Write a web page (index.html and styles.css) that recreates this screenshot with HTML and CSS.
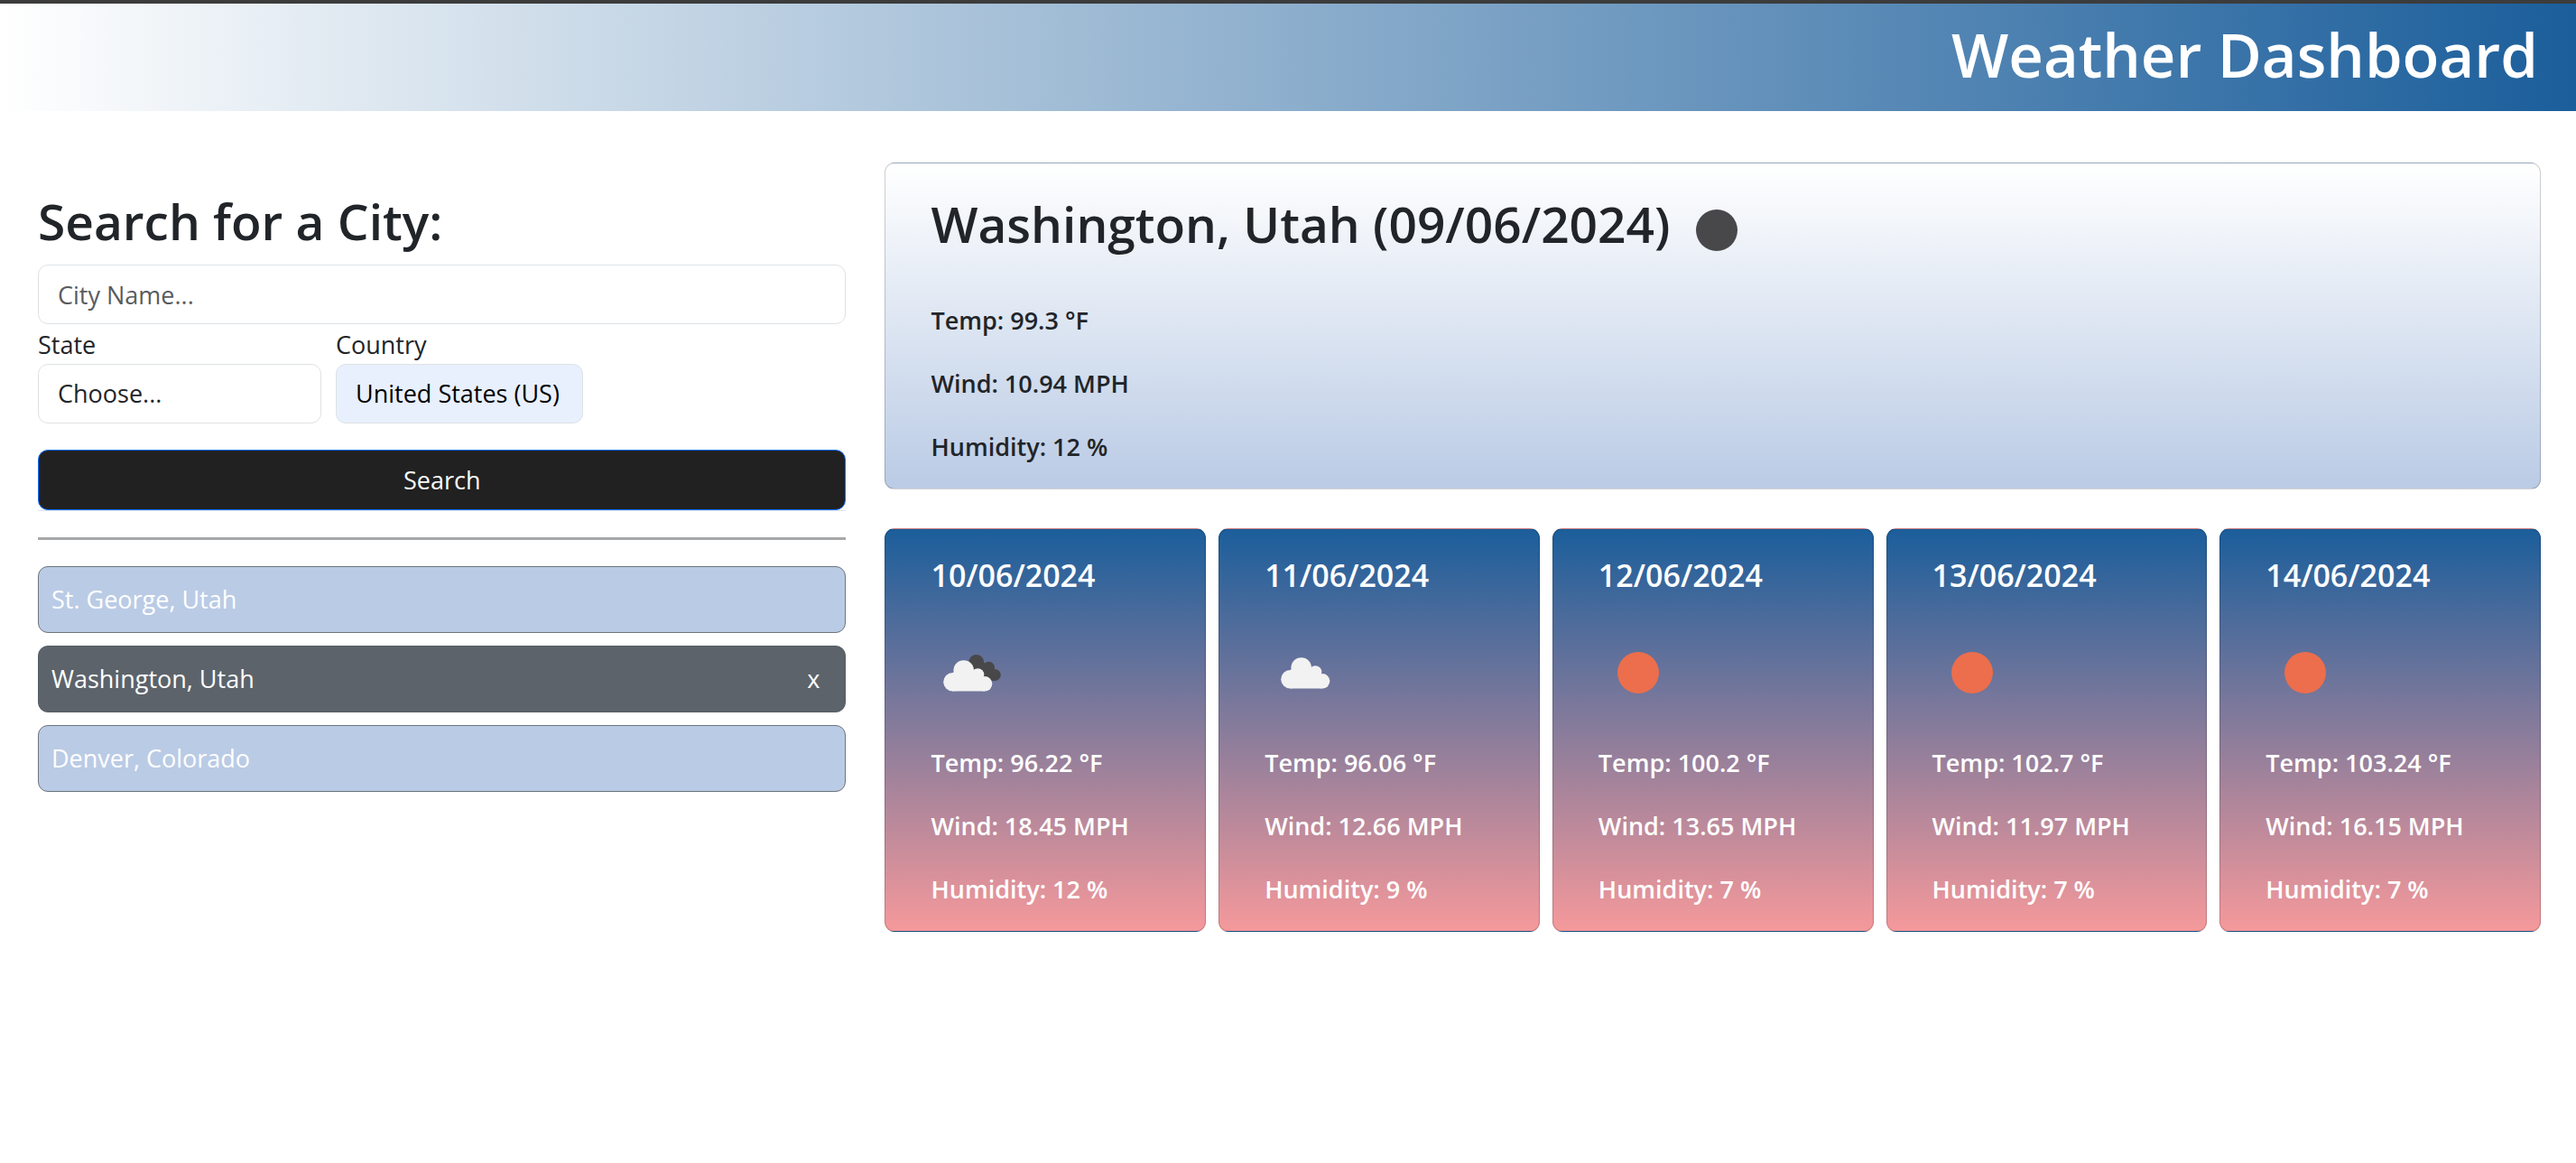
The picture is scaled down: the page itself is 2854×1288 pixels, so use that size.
FILE: index.html
```html
<!DOCTYPE html>
<html lang="en">
<head>
<meta charset="utf-8">
<meta name="viewport" content="width=device-width, initial-scale=1">
<title>Weather Dashboard</title>
<link rel="stylesheet" href="styles.css">
</head>
<body>
<svg width="0" height="0" class="sprite" aria-hidden="true">
  <symbol id="cloud" viewBox="0 0 55 35">
    <circle cx="10.500" cy="24.300" r="10.300"/>
    <circle cx="22.700" cy="11.500" r="11.300"/>
    <circle cx="38.300" cy="16.200" r="7"/>
    <circle cx="46" cy="26.300" r="8.300"/>
    <path d="M10.500 14L22 8L38 14L46 20V34.600H10.500Z"/>
  </symbol>
</svg>
<header class="site-header"><h1>Weather Dashboard</h1></header>
<main class="layout">
  <aside class="sidebar">
    <form class="search">
      <h2><label for="city">Search for a City:</label></h2>
      <input id="city" class="control" type="text" placeholder="City Name...">
      <div class="field-row">
        <div class="field state">
          <label for="state">State</label>
          <select id="state" class="control"><option>Choose...</option></select>
        </div>
        <div class="field country">
          <label for="country">Country</label>
          <select id="country" class="control filled"><option>United States (US)</option></select>
        </div>
      </div>
      <button class="search-button" type="submit">Search</button>
    </form>
    <hr class="divider">
    <ul class="history">
      <li><button type="button">St. George, Utah</button></li>
      <li class="active"><button type="button">Washington, Utah</button><button type="button" class="remove" aria-label="Remove Washington, Utah">x</button></li>
      <li><button type="button">Denver, Colorado</button></li>
    </ul>
  </aside>
  <section class="weather">
    <article class="card today">
      <div class="title-row">
        <h2>Washington, Utah (09/06/2024)</h2>
        <svg class="icon" viewBox="0 0 88 88"><circle cx="44" cy="44" r="23" fill="#48484a"/></svg>
      </div>
      <p>Temp: 99.3 °F</p>
      <p>Wind: 10.94 MPH</p>
      <p>Humidity: 12 %</p>
    </article>
    <div class="forecast">
      <article class="card day">
        <h3>10/06/2024</h3>
        <svg class="icon" viewBox="0 0 88 88">
          <g fill="#48484a"><circle cx="50.700" cy="32.500" r="8.500"/><circle cx="64.500" cy="38.300" r="6.500"/><circle cx="71.300" cy="46.500" r="6.500"/><path d="M50 28L65 36L72 53H56Z"/></g>
          <use href="#cloud" x="14" y="30" width="55" height="35" fill="#f2f2f2"/>
        </svg>
        <p>Temp: 96.22 °F</p>
        <p>Wind: 18.45 MPH</p>
        <p>Humidity: 12 %</p>
      </article>
      <article class="card day">
        <h3>11/06/2024</h3>
        <svg class="icon" viewBox="0 0 88 88"><use href="#cloud" x="18" y="27" width="55" height="35" fill="#f2f2f2"/></svg>
        <p>Temp: 96.06 °F</p>
        <p>Wind: 12.66 MPH</p>
        <p>Humidity: 9 %</p>
      </article>
      <article class="card day">
        <h3>12/06/2024</h3>
        <svg class="icon" viewBox="0 0 88 88"><circle cx="44" cy="44" r="23" fill="#ec6e4c"/></svg>
        <p>Temp: 100.2 °F</p>
        <p>Wind: 13.65 MPH</p>
        <p>Humidity: 7 %</p>
      </article>
      <article class="card day">
        <h3>13/06/2024</h3>
        <svg class="icon" viewBox="0 0 88 88"><circle cx="44" cy="44" r="23" fill="#ec6e4c"/></svg>
        <p>Temp: 102.7 °F</p>
        <p>Wind: 11.97 MPH</p>
        <p>Humidity: 7 %</p>
      </article>
      <article class="card day">
        <h3>14/06/2024</h3>
        <svg class="icon" viewBox="0 0 88 88"><circle cx="44" cy="44" r="23" fill="#ec6e4c"/></svg>
        <p>Temp: 103.24 °F</p>
        <p>Wind: 16.15 MPH</p>
        <p>Humidity: 7 %</p>
      </article>
    </div>
  </section>
</main>
</body>
</html>
```

FILE: styles.css
```css
* { box-sizing: border-box; }
body {
  margin: 0;
  background: #fff;
  color: #212529;
  font: 400 27px/42px "Open Sans", "Noto Sans", sans-serif;
}
.sprite { display: block; }
h1, h2, h3, p { margin: 0; }
.site-header {
  border-top: 4px solid #3c3c3c;
  padding: 14px 42px 21px;
  background: linear-gradient(to right, #fff, #1b5e9b);
  color: #fff;
  text-align: right;
}
h1 { font-size: 67px; line-height: 84px; font-weight: 600; }
h2 { font-size: 55px; line-height: 74px; font-weight: 600; }
.layout {
  display: grid;
  grid-template-columns: 328fr 672fr;
  gap: 43px;
  padding: 57px 39px 57px 42px;
}
.sidebar { padding-top: 28px; }
.search { border-bottom: 1px solid #dee2e6; }
.search h2 { margin-bottom: 11px; }
.control {
  appearance: none;
  display: block;
  width: 100%;
  height: 66px;
  padding: 0 21px;
  border: 1px solid #dee2e6;
  border-radius: 11px;
  background: #fff;
  color: #212529;
  font: inherit;
}
.control::placeholder { color: #595c5f; opacity: 1; }
.control.filled { background: #e8f0fe; color: #000; }
.field-row { display: flex; gap: 16px; margin-top: 2px; }
.field label { display: block; }
.state { flex: 0 1 314px; }
.country { flex: 0 1 274px; }
.search-button {
  display: block;
  width: 100%;
  height: 67px;
  margin-top: 29px;
  border: 1px solid #0d6efd;
  border-radius: 11px;
  background: #212121;
  color: #fff;
  font: inherit;
}
.divider { height: 3px; margin: 29px 0; border: 0; background: #a6a8a9; }
.history { display: grid; gap: 14px; margin: 0; padding: 0; list-style: none; }
.history li {
  display: flex;
  height: 74px;
  border: 1px solid #6c757d;
  border-radius: 11px;
  background: #bacbe5;
}
.history .active { background: #5c636a; border-color: #565e64; }
.history button {
  flex: 1;
  padding: 0 14px;
  border: 0;
  background: none;
  color: #fff;
  font: inherit;
  text-align: left;
}
.history .remove { flex: none; padding: 0 28px; }
.weather { min-width: 0; }
.card {
  border: 1px solid rgba(0, 0, 0, 0.18);
  border-radius: 11px;
  padding: 30px 28px 11px 50px;
  font-weight: 600;
}
.card p { padding: 14px 0; }
.today { background: linear-gradient(#fff, #bacbe5); }
.title-row { display: flex; align-items: flex-start; gap: 8px; }
.icon { display: block; flex: none; width: 88px; height: 88px; margin-bottom: 21px; }
.forecast {
  display: grid;
  grid-template-columns: repeat(5, 1fr);
  gap: 14px;
  margin-top: 43px;
}
.day { background: linear-gradient(#1b5e9b, #f5999b); color: #fff; }
.day h3 { margin-bottom: 43px; font-size: 34px; line-height: 42px; font-weight: 600; }
```
